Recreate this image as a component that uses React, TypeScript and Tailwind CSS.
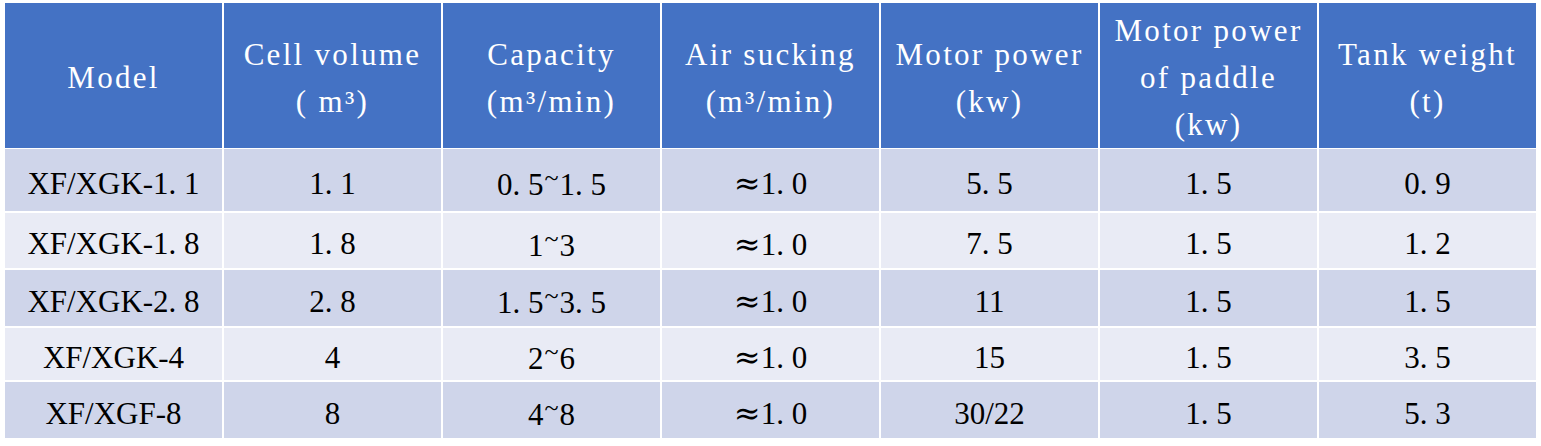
const headers: string[][] = [
  ["Model"],
  ["Cell volume", "( m³)"],
  ["Capacity", "(m³/min)"],
  ["Air sucking", "(m³/min)"],
  ["Motor power", "(kw)"],
  ["Motor power", "of paddle", "(kw)"],
  ["Tank weight", "(t)"],
];

// rows of the spec table, with their measured heights
const rows: { h: string; cells: string[] }[] = [
  { h: "h-[62px]", cells: ["XF/XGK-1. 1", "1. 1", "0. 5~1. 5", "≈1. 0", "5. 5", "1. 5", "0. 9"] },
  { h: "h-[55px]", cells: ["XF/XGK-1. 8", "1. 8", "1~3", "≈1. 0", "7. 5", "1. 5", "1. 2"] },
  { h: "h-[56px]", cells: ["XF/XGK-2. 8", "2. 8", "1. 5~3. 5", "≈1. 0", "11", "1. 5", "1. 5"] },
  { h: "h-[52px]", cells: ["XF/XGK-4", "4", "2~6", "≈1. 0", "15", "1. 5", "3. 5"] },
  { h: "h-[56px]", cells: ["XF/XGF-8", "8", "4~8", "≈1. 0", "30/22", "1. 5", "5. 3"] },
];

// tilde sits high and approx sign is wide, as in the source sheet
function Cell({ text }: { text: string }) {
  const parts = text.split(/([~≈])/);
  return (
    <span>
      {parts.map((p, i) =>
        p === "~" ? (
          <span key={i} className="align-[0.36em] text-[26px] leading-none mx-[1px]">
            ~
          </span>
        ) : p === "≈" ? (
          <span key={i} className="font-['DejaVu_Serif',serif] text-[32px] leading-none">
            ≈
          </span>
        ) : (
          <span key={i}>{p}</span>
        )
      )}
    </span>
  );
}

export default function App() {
  return (
    <div className="w-[1541px] h-[446px] bg-white pl-[5px] pt-[3px] overflow-hidden">
      <div className="flex flex-col gap-[2px] w-[1531px]">
        {/* Header */}
        <div className="grid grid-cols-[repeat(7,217px)] gap-x-[2px] h-[142px] mb-[2px]">
          {headers.map((lines, i) => (
            <div
              key={i}
              className="bg-[#4472c4] flex flex-col items-center justify-center pt-[4px] text-white text-[31px] leading-[47px] tracking-[2.3px] font-['Liberation_Serif',serif]"
            >
              {lines.map((line) => (
                <span key={line} className="whitespace-pre">
                  {line}
                </span>
              ))}
            </div>
          ))}
        </div>

        {/* Body */}
        {rows.map((row, r) => (
          <div
            key={r}
            className={`grid grid-cols-[repeat(7,217px)] gap-x-[2px] ${row.h}`}
          >
            {row.cells.map((cell, c) => (
              <div
                key={c}
                className={`${
                  r % 2 === 0 ? "bg-[#cfd5ea]" : "bg-[#e9ebf5]"
                } flex items-center justify-center pt-[6px] text-black text-[31px] leading-none font-['Liberation_Serif',serif] whitespace-pre`}
              >
                <Cell text={cell} />
              </div>
            ))}
          </div>
        ))}
      </div>
    </div>
  );
}
